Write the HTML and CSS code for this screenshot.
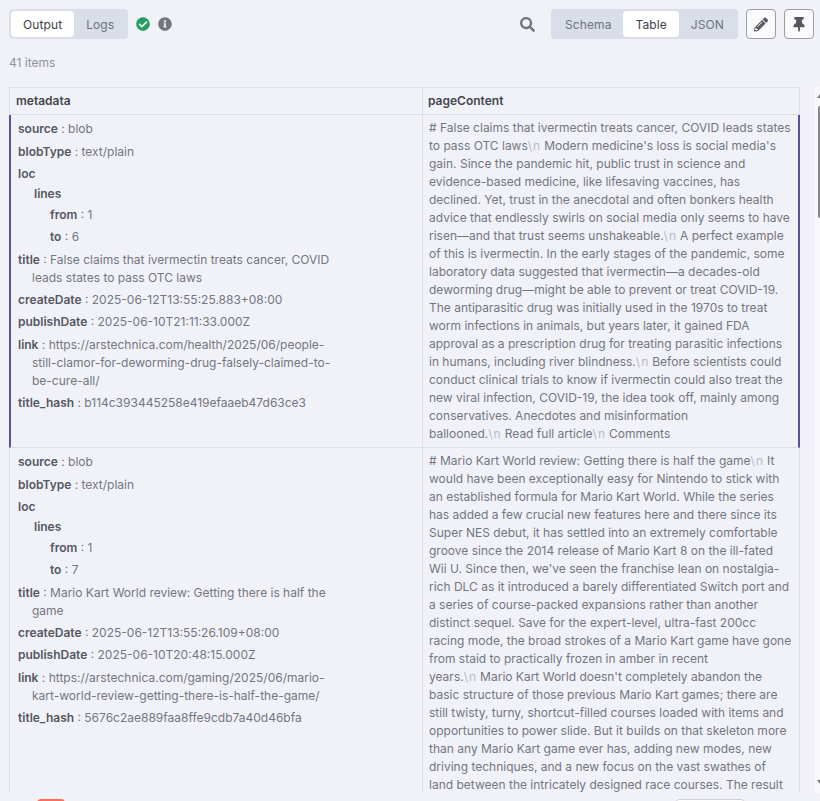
FILE: index.html
```html
<!DOCTYPE html>
<html lang="en">
  <head>
    <meta charset="UTF-8" />
    <title>Output</title>
    <link rel="stylesheet" href="styles.css">
  </head>
  <body>
    <header class="toolbar">
      <div class="tabs">
        <span class="tab active">Output</span>
        <span class="tab">Logs</span>
      </div>
      <svg class="status success" viewBox="0 0 512 512"><path d="M504 256c0 136.967-111.033 248-248 248S8 392.967 8 256 119.033 8 256 8s248 111.033 248 248zM227.314 387.314l184-184c6.248-6.248 6.248-16.379 0-22.627l-22.627-22.627c-6.248-6.249-16.379-6.249-22.628 0L216 308.118l-70.059-70.059c-6.248-6.248-16.379-6.248-22.628 0l-22.627 22.627c-6.248 6.248-6.248 16.379 0 22.627l104 104c6.249 6.249 16.379 6.249 22.628.001z"/></svg>
      <svg class="status info" viewBox="0 0 512 512"><path d="M256 8C119.043 8 8 119.083 8 256c0 136.997 111.043 248 248 248s248-111.003 248-248C504 119.083 392.957 8 256 8zm0 110c23.196 0 42 18.804 42 42s-18.804 42-42 42-42-18.804-42-42 18.804-42 42-42zm56 254c0 6.627-5.373 12-12 12h-88c-6.627 0-12-5.373-12-12v-24c0-6.627 5.373-12 12-12h12v-64h-12c-6.627 0-12-5.373-12-12v-24c0-6.627 5.373-12 12-12h64c6.627 0 12 5.373 12 12v100h12c6.627 0 12 5.373 12 12v24z"/></svg>
      <div class="toolbar-right">
        <svg class="search" viewBox="0 0 512 512"><path d="M505 442.7L405.3 343c-4.5-4.5-10.6-7-17-7H372c27.6-35.3 44-79.7 44-128C416 93.1 322.9 0 208 0S0 93.1 0 208s93.1 208 208 208c48.3 0 92.7-16.4 128-44v16.3c0 6.4 2.5 12.5 7 17l99.7 99.7c9.4 9.4 24.6 9.4 33.9 0l28.3-28.3c9.4-9.4 9.4-24.6.1-34zM208 336c-70.7 0-128-57.2-128-128 0-70.7 57.2-128 128-128 70.7 0 128 57.2 128 128 0 70.7-57.2 128-128 128z"/></svg>
        <div class="tabs views">
          <span class="tab">Schema</span>
          <span class="tab active">Table</span>
          <span class="tab">JSON</span>
        </div>
        <button class="icon-btn">
          <svg viewBox="0 0 512 512"><path d="M497.9 142.1l-46.1 46.1c-4.7 4.7-12.3 4.7-17 0l-111-111c-4.7-4.7-4.7-12.3 0-17l46.1-46.1c18.7-18.7 49.1-18.7 67.9 0l60.1 60.1c18.8 18.7 18.8 49.1 0 67.9zM284.2 99.8L21.6 362.4.4 483.9c-2.9 16.4 11.4 30.6 27.8 27.8l121.5-21.3 262.6-262.6c4.7-4.7 4.7-12.3 0-17l-111-111c-4.8-4.7-12.4-4.7-17.1 0zM124.1 339.9c-5.5-5.5-5.5-14.3 0-19.8l154-154c5.5-5.5 14.3-5.5 19.8 0s5.5 14.3 0 19.8l-154 154c-5.5 5.5-14.3 5.5-19.8 0zM88 424h48v36.3l-64.5 11.3-31.1-31.1L51.7 376H88v48z"/></svg>
        </button>
        <button class="icon-btn">
          <svg viewBox="0 0 384 512"><path d="M298.028 214.267L285.793 96H328c13.255 0 24-10.745 24-24V24c0-13.255-10.745-24-24-24H56C42.745 0 32 10.745 32 24v48c0 13.255 10.745 24 24 24h42.207L85.972 214.267C37.465 236.82 0 277.261 0 328c0 13.255 10.745 24 24 24h136v104.007c0 1.242.289 2.467.845 3.578l24 48c2.941 5.882 11.364 5.893 14.311 0l24-48a8.008 8.008 0 0 0 .845-3.578V352h136c13.255 0 24-10.745 24-24-.001-51.183-37.983-91.42-85.973-113.733z"/></svg>
        </button>
      </div>
    </header>

    <div class="count">41 items</div>

    <main class="content">
      <div class="table-wrap">
        <table class="data">
          <thead>
            <tr><th class="col-meta">metadata</th><th>pageContent</th></tr>
          </thead>
          <tbody>
            <tr class="selected">
              <td>
                <div class="tree">
                  <div class="leaf"><b>source</b> : blob</div>
                  <div class="leaf"><b>blobType</b> : text/plain</div>
                  <div class="branch"><b>loc</b></div>
                  <div class="nested">
                    <div class="branch"><b>lines</b></div>
                    <div class="nested">
                      <div class="leaf"><b>from</b> : 1</div>
                      <div class="leaf"><b>to</b> : 6</div>
                    </div>
                  </div>
                  <div class="leaf"><b>title</b> : False claims that ivermectin treats cancer, COVID leads states to pass OTC laws</div>
                  <div class="leaf"><b>createDate</b> : 2025-06-12T13:55:25.883+08:00</div>
                  <div class="leaf"><b>publishDate</b> : 2025-06-10T21:11:33.000Z</div>
                  <div class="leaf"><b>link</b> : https://arstechnica.com/health/2025/06/people-still-clamor-for-deworming-drug-falsely-claimed-to-be-cure-all/</div>
                  <div class="leaf"><b>title_hash</b> : b114c393445258e419efaaeb47d63ce3</div>
                </div>
              </td>
              <td>
                # False claims that ivermectin treats cancer, COVID leads states to pass OTC laws<i>\n</i>Modern medicine's loss is social media's gain. Since the pandemic hit, public trust in science and evidence-based medicine, like lifesaving vaccines, has declined. Yet, trust in the anecdotal and often bonkers health advice that endlessly swirls on social media only seems to have risen—and that trust seems unshakeable.<i>\n</i>A perfect example of this is ivermectin. In the early stages of the pandemic, some laboratory data suggested that ivermectin—a decades-old deworming drug—might be able to prevent or treat COVID-19. The antiparasitic drug was initially used in the 1970s to treat worm infections in animals, but years later, it gained FDA approval as a prescription drug for treating parasitic infections in humans, including river blindness.<i>\n</i>Before scientists could conduct clinical trials to know if ivermectin could also treat the new viral infection, COVID-19, the idea took off, mainly among conservatives. Anecdotes and misinformation ballooned.<i>\n</i>Read full article<i>\n</i>Comments
              </td>
            </tr>
            <tr>
              <td>
                <div class="tree">
                  <div class="leaf"><b>source</b> : blob</div>
                  <div class="leaf"><b>blobType</b> : text/plain</div>
                  <div class="branch"><b>loc</b></div>
                  <div class="nested">
                    <div class="branch"><b>lines</b></div>
                    <div class="nested">
                      <div class="leaf"><b>from</b> : 1</div>
                      <div class="leaf"><b>to</b> : 7</div>
                    </div>
                  </div>
                  <div class="leaf"><b>title</b> : Mario Kart World review: Getting there is half the game</div>
                  <div class="leaf"><b>createDate</b> : 2025-06-12T13:55:26.109+08:00</div>
                  <div class="leaf"><b>publishDate</b> : 2025-06-10T20:48:15.000Z</div>
                  <div class="leaf"><b>link</b> : https://arstechnica.com/gaming/2025/06/mario-kart-world-review-getting-there-is-half-the-game/</div>
                  <div class="leaf"><b>title_hash</b> : 5676c2ae889faa8ffe9cdb7a40d46bfa</div>
                </div>
              </td>
              <td>
                # Mario Kart World review: Getting there is half the game<i>\n</i>It would have been exceptionally easy for Nintendo to stick with an established formula for Mario Kart World. While the series has added a few crucial new features here and there since its Super NES debut, it has settled into an extremely comfortable groove since the 2014 release of Mario Kart 8 on the ill-fated Wii U. Since then, we've seen the franchise lean on nostalgia-rich DLC as it introduced a barely differentiated Switch port and a series of course-packed expansions rather than another distinct sequel. Save for the expert-level, ultra-fast 200cc racing mode, the broad strokes of a Mario Kart game have gone from staid to practically frozen in amber in recent years.<i>\n</i>Mario Kart World doesn't completely abandon the basic structure of those previous Mario Kart games; there are still twisty, turny, shortcut-filled courses loaded with items and opportunities to power slide. But it builds on that skeleton more than any Mario Kart game ever has, adding new modes, new driving techniques, and a new focus on the vast swathes of land between the intricately designed race courses. The result
              </td>
            </tr>
          </tbody>
        </table>
      </div>
      <div class="scroll-lane">
        <span class="arrow up"></span>
        <span class="thumb"></span>
        <span class="arrow down"></span>
      </div>
    </main>

    <footer class="footer">
      <span class="chip"></span>
      <span class="footer-box"></span>
    </footer>
  </body>
</html>
```

FILE: styles.css
```css
* {
  box-sizing: border-box;
}

html,
body {
  height: 100%;
}

body {
  display: flex;
  flex-direction: column;
  margin: 0;
  overflow: hidden;
  background: #f0f2f8;
  font-family: Inter, "Noto Sans", sans-serif;
  font-size: 12px;
  color: #74767f;
}

.toolbar {
  display: flex;
  align-items: center;
  height: 30px;
  margin: 9px 6px 0 9px;
}

.toolbar-right {
  display: flex;
  align-items: center;
  margin-left: auto;
}

.tabs {
  display: flex;
  height: 30px;
  padding: 2px;
  border-radius: 4px;
  background: #d9dee8;
}

.tab {
  display: flex;
  align-items: center;
  justify-content: center;
  padding: 0 12px;
  border-radius: 4px;
  color: #6f7280;
  letter-spacing: 0.1px;
}

.tab.active {
  background: #fff;
  color: #3d3f49;
}

.status {
  width: 14px;
  height: 14px;
  margin-left: 8px;
}

.status.success {
  fill: #2a9d62;
}

.status.info {
  fill: #74757f;
}

.search {
  width: 15px;
  height: 15px;
  margin-right: 16px;
  fill: #74757f;
}

.icon-btn {
  display: flex;
  align-items: center;
  justify-content: center;
  width: 30px;
  height: 30px;
  margin-left: 8px;
  padding: 0;
  border: 1px solid #9a9ca6;
  border-radius: 4px;
  background: #fafafc;
}

.icon-btn svg {
  width: 14px;
  height: 15px;
  fill: #555762;
}

.count {
  height: 18px;
  margin: 15px 0 0 9px;
  line-height: 18px;
  color: #8f919c;
}

.content {
  display: flex;
  flex: 1;
  min-height: 0;
  margin-top: 15px;
}

.table-wrap {
  width: 791px;
  margin-left: 9px;
  overflow: hidden;
}

.data {
  width: 791px;
  table-layout: fixed;
  border-collapse: separate;
  border-spacing: 0;
  line-height: 18px;
}

.data th {
  height: 28px;
  padding: 0 5px;
  border: 1px solid #dbdfe8;
  border-left-width: 0;
  background: #f0f2f8;
  color: #444650;
  font-weight: 600;
  text-align: left;
}

.data th:first-child {
  padding-left: 6px;
  border-left-width: 1px;
}

.col-meta {
  width: 414px;
}

.data td {
  padding: 4px 6px;
  border-right: 1px solid #dbdfe8;
  border-bottom: 1px solid #dbdfe8;
  vertical-align: top;
}

.data td:first-child {
  padding-left: 8px;
  border-left: 1px solid #dbdfe8;
}

.data tr.selected td:first-child {
  padding-left: 7px;
  border-left: 2px solid #5b4fa8;
}

.data tr.selected td:last-child {
  padding-right: 5px;
  border-right: 2px solid #5b4fa8;
}

.data b {
  color: #555762;
  font-weight: 600;
}

.data i {
  margin-right: 3px;
  color: #b8bac4;
  font-style: normal;
  letter-spacing: 1px;
}

.tree {
  width: 314px;
  margin-top: -0.9px;
}

.leaf {
  padding: 2px 0 2.4px 14px;
  text-indent: -14px;
}

.branch {
  padding-top: 1px;
  padding-bottom: 1px;
}

.tree > .branch {
  padding-top: 2px;
}

.nested {
  padding-left: 16px;
}

.scroll-lane {
  display: flex;
  flex-direction: column;
  align-items: flex-end;
  width: 5px;
  margin-left: 15px;
  background: #f8f8fb;
}

.thumb {
  width: 2px;
  height: 112px;
  margin-top: 8px;
  border-radius: 2px 0 0 2px;
  background: #85868c;
}

.arrow {
  width: 0;
  height: 0;
  border-left: 3px solid transparent;
}

.arrow.up {
  margin-top: 7px;
  border-bottom: 4px solid #777;
}

.arrow.down {
  margin-top: auto;
  margin-bottom: 9px;
  border-top: 4px solid #777;
}

.footer {
  display: flex;
  flex: none;
  height: 8px;
  padding-top: 6px;
  overflow: hidden;
}

.chip {
  width: 28px;
  height: 20px;
  margin-left: 37px;
  border-radius: 4px;
  background: #ff6d5a;
}

.footer-box {
  width: 70px;
  height: 20px;
  margin-left: 610px;
  border: 1px solid #d0d2da;
  border-radius: 4px;
  background: #fff;
}
```
